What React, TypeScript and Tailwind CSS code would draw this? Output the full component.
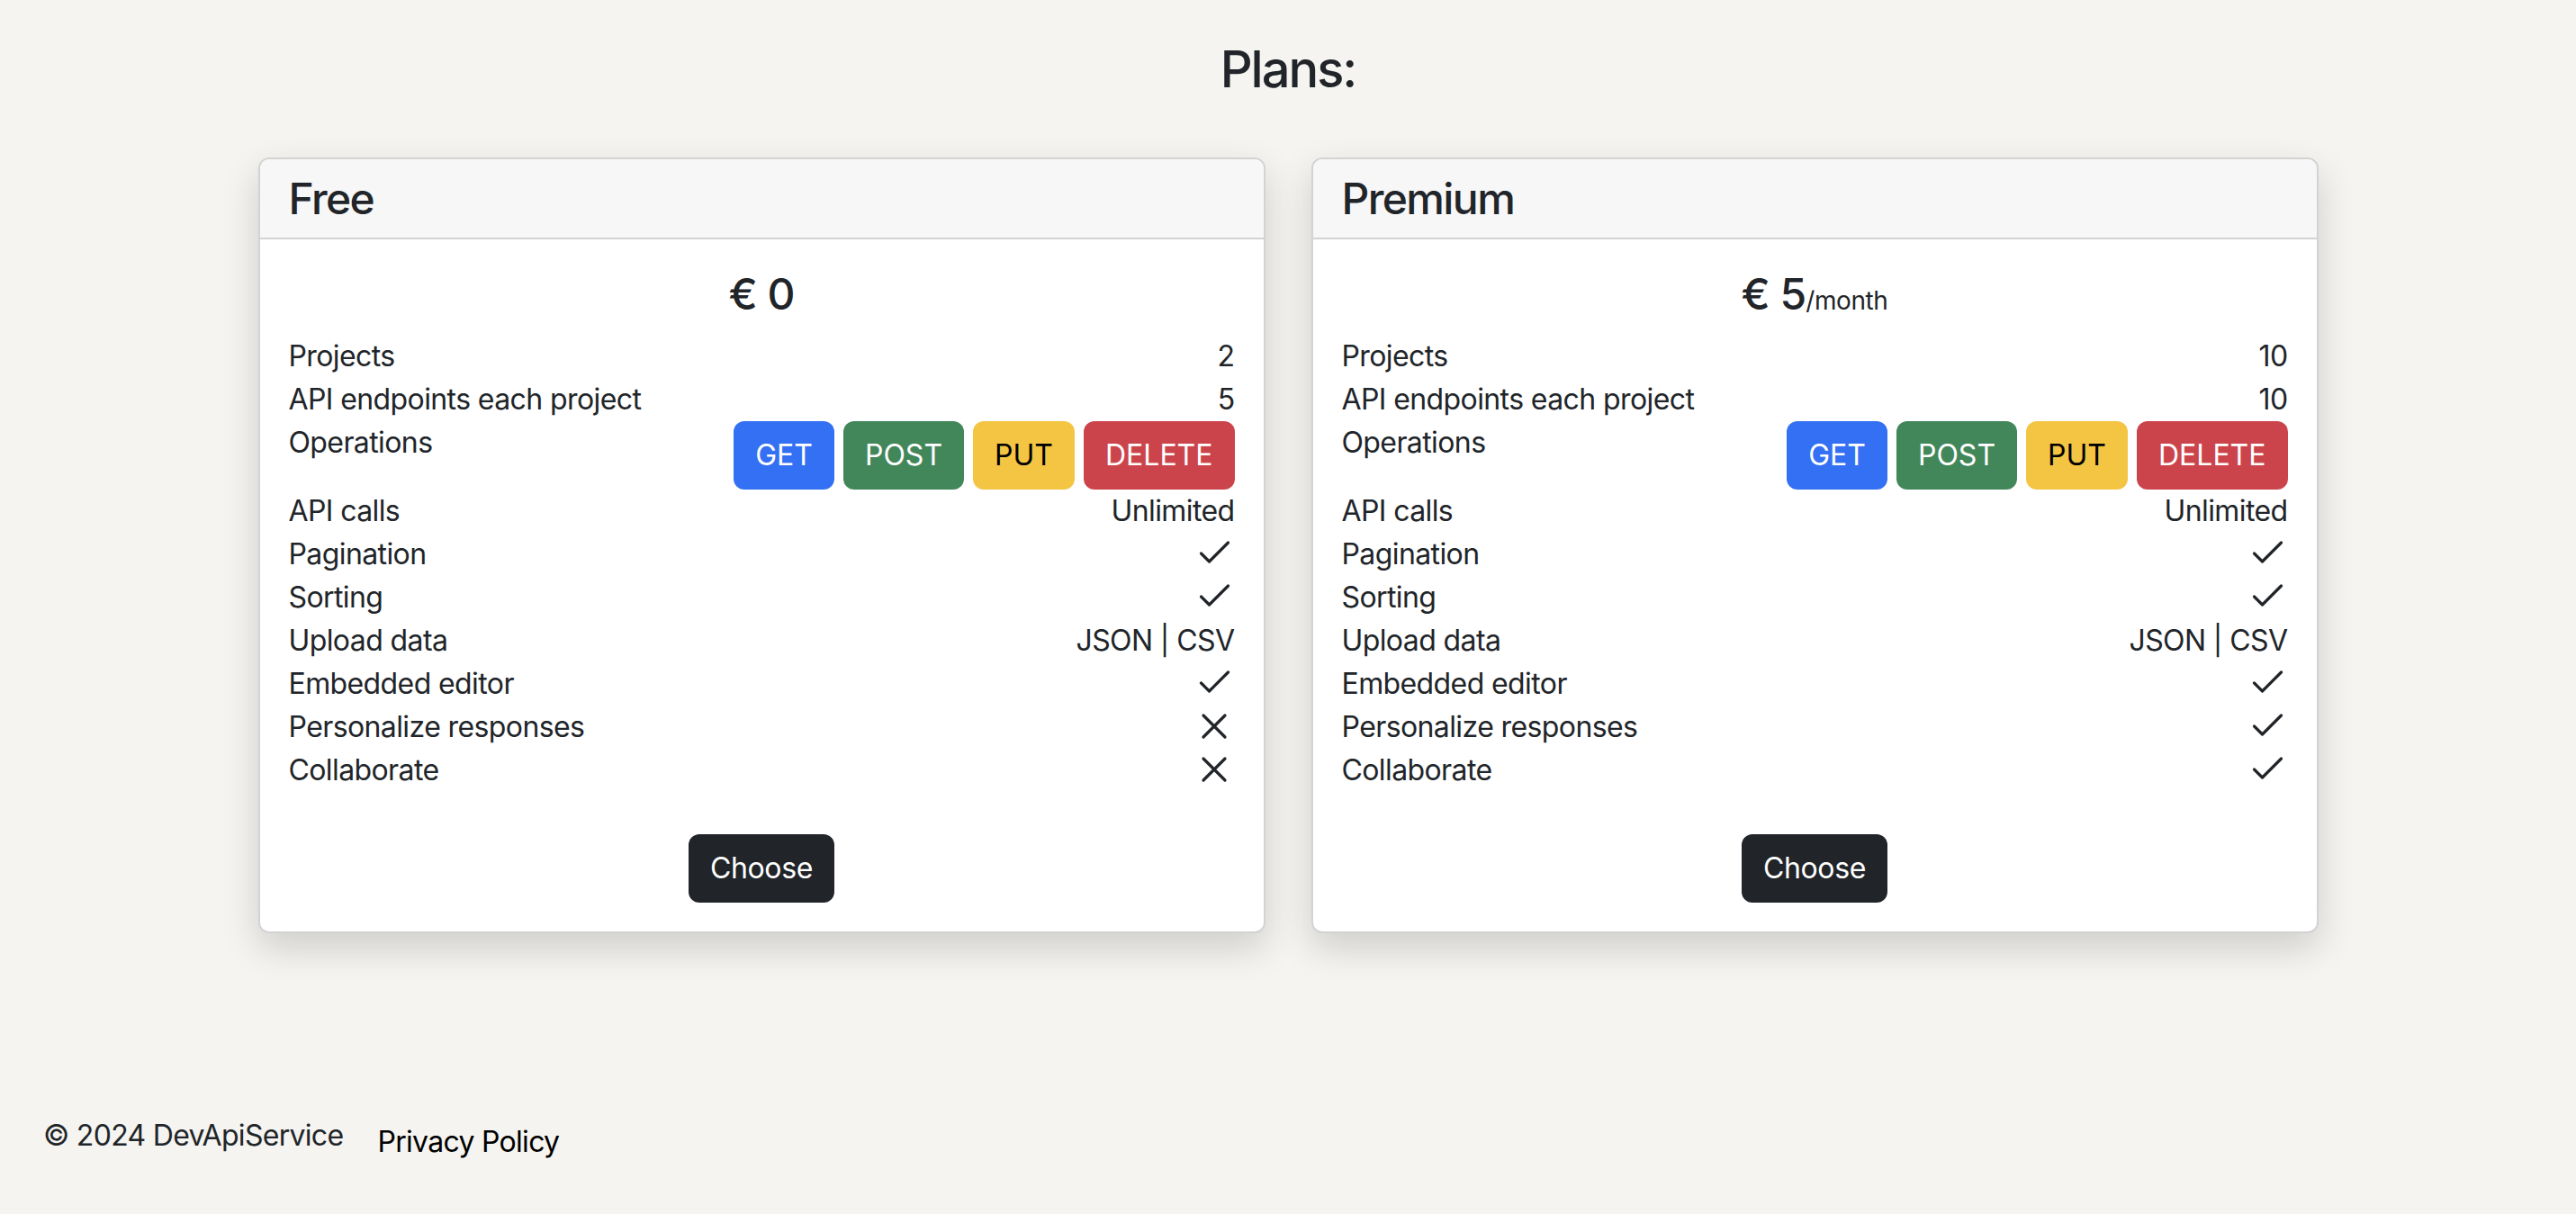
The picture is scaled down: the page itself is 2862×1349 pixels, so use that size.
import React from "react";

type Value = string | "yes" | "no" | "ops";

interface Plan {
  name: string;
  price: string;
  period?: string;
  rows: { label: string; value: Value }[];
}

const plans: Plan[] = [
  {
    name: "Free",
    price: "€ 0",
    rows: [
      { label: "Projects", value: "2" },
      { label: "API endpoints each project", value: "5" },
      { label: "Operations", value: "ops" },
      { label: "API calls", value: "Unlimited" },
      { label: "Pagination", value: "yes" },
      { label: "Sorting", value: "yes" },
      { label: "Upload data", value: "JSON | CSV" },
      { label: "Embedded editor", value: "yes" },
      { label: "Personalize responses", value: "no" },
      { label: "Collaborate", value: "no" },
    ],
  },
  {
    name: "Premium",
    price: "€ 5",
    period: "/month",
    rows: [
      { label: "Projects", value: "10" },
      { label: "API endpoints each project", value: "10" },
      { label: "Operations", value: "ops" },
      { label: "API calls", value: "Unlimited" },
      { label: "Pagination", value: "yes" },
      { label: "Sorting", value: "yes" },
      { label: "Upload data", value: "JSON | CSV" },
      { label: "Embedded editor", value: "yes" },
      { label: "Personalize responses", value: "yes" },
      { label: "Collaborate", value: "yes" },
    ],
  },
];

const CheckIcon = () => (
  <svg width="48" height="48" viewBox="0 0 48 48" fill="none" stroke="#212529" strokeWidth="3.2" strokeLinecap="round" strokeLinejoin="round">
    <path d="M10.5 23 L19.5 32 L40.5 11" />
  </svg>
);

const XIcon = () => (
  <svg width="48" height="48" viewBox="0 0 48 48" fill="none" stroke="#212529" strokeWidth="3.2" strokeLinecap="round">
    <path d="M13 11 L37 35 M37 11 L13 35" />
  </svg>
);

const Operations = () => (
  <div className="flex gap-[10px] tracking-normal">
    <button className="h-[76px] px-[24px] rounded-[12px] bg-[#3470f3] text-white text-[32px]">GET</button>
    <button className="h-[76px] px-[24px] rounded-[12px] bg-[#42875a] text-white text-[32px]">POST</button>
    <button className="h-[76px] px-[24px] rounded-[12px] bg-[#f4c443] text-black text-[32px]">PUT</button>
    <button className="h-[76px] px-[24px] rounded-[12px] bg-[#cc444b] text-white text-[32px]">DELETE</button>
  </div>
);

const PlanCard = ({ plan }: { plan: Plan }) => (
  <div className="w-[1119px] bg-white border-2 border-[#d3d3d3] rounded-[12px] shadow-[0_16px_40px_rgba(0,0,0,0.16)]">
    <div className="bg-[#f7f7f7] px-[32px] py-[15px] border-b-2 border-[#d3d3d3] rounded-t-[10px]">
      <h4 className="text-[48px] leading-[57px] font-medium tracking-[-1.6px]">{plan.name}</h4>
    </div>
    <div className="p-[32px]">
      <h4 className="h-[57.6px] text-center text-[48px] leading-[57.6px] font-medium tracking-[-1px] mb-[16px]">
        {plan.price}
        {plan.period && (
          <small className="text-[28px] leading-[0] font-normal tracking-[-0.4px]">{plan.period}</small>
        )}
      </h4>
      {plan.rows.map((row) => (
        <div key={row.label} className="flex justify-between items-start text-[32px] leading-[48px] tracking-[-0.6px]">
          <span>{row.label}</span>
          {row.value === "ops" ? (
            <Operations />
          ) : row.value === "yes" ? (
            <CheckIcon />
          ) : row.value === "no" ? (
            <XIcon />
          ) : (
            <span>{row.value}</span>
          )}
        </div>
      ))}
      <div className="flex justify-center mt-[47px]">
        <button className="h-[76px] px-[24px] rounded-[12px] bg-[#212529] text-white text-[32px] tracking-[-0.4px]">Choose</button>
      </div>
    </div>
  </div>
);

export default function App() {
  return (
    <div className="min-h-screen flex flex-col bg-[#f5f4f0] text-[#212529] font-['Inter','Noto_Sans',sans-serif]">
      <main className="flex-1">
        <h3 className="text-center text-[56px] leading-[67px] font-medium tracking-[-2px] pt-[44px]">Plans:</h3>
        <div className="flex justify-center gap-[51px] mt-[64px]">
          {plans.map((plan) => (
            <PlanCard key={plan.name} plan={plan} />
          ))}
        </div>
      </main>
      <footer className="flex items-start px-[48px] pb-[56px] text-[32px] leading-[48px] tracking-[-0.7px]">
        <span>© 2024 DevApiService</span>
        <a href="#" className="ml-[38px] mt-[7px] text-black">Privacy Policy</a>
      </footer>
    </div>
  );
}
